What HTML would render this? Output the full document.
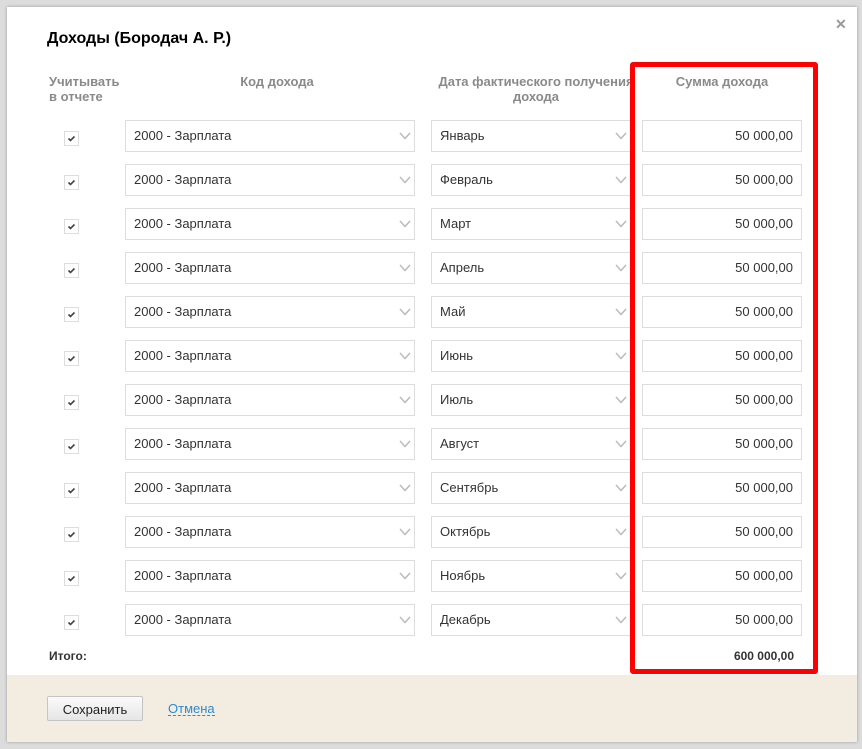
<!DOCTYPE html>
<html><head><meta charset="utf-8"><style>
body{margin:0;width:862px;height:749px;background:#dcdcdc;font-family:"Liberation Sans",Arial,sans-serif;position:relative;overflow:hidden}
.dlg{position:absolute;left:7px;top:7px;width:850px;height:735px;background:#fff;box-shadow:0 0 3px rgba(0,0,0,.3)}
.abs{position:absolute}
.title{left:40px;top:23px;font-size:16px;font-weight:bold;color:#000}
.close{left:828px;top:9px;font-size:14px;font-weight:bold;color:#999}
.h{font-size:13px;font-weight:bold;color:#8a8a8a;line-height:15px}
.box{position:absolute;border:1px solid #ddd;background:#fff;box-sizing:border-box;height:32px;font-size:13px;color:#333;line-height:30px;padding-left:8px}
.arr{position:absolute;right:3px;top:11px;width:12px;height:8px}
.cb{position:absolute;width:15px;height:15px;border:1px solid #ddd;box-sizing:border-box}
.num{text-align:right;padding-right:8px}
.red{position:absolute;left:623px;top:55px;width:188px;height:612px;border:5px solid #f00;border-radius:3px;box-sizing:border-box}
.foot{position:absolute;left:0;top:668px;width:850px;height:67px;background:#f3ece0}
.btn{position:absolute;left:40px;top:21px;width:96px;height:25px;border:1px solid #c4c4c4;border-radius:2px;background:linear-gradient(#fafafa,#e6e6e6);font-size:13px;text-align:center;line-height:25px;color:#222;box-sizing:border-box}
.link{position:absolute;left:161px;top:27px;font-size:13px;color:#2a8bd0;border-bottom:1px dashed #2a8bd0;line-height:13px}
</style></head><body>
<div class="dlg">
<div class="abs title">Доходы (Бородач А. Р.)</div>
<div class="abs close">✕</div>
<div class="abs h" style="left:42px;top:67px">Учитывать<br>в отчете</div>
<div class="abs h" style="left:170px;top:67px;width:200px;text-align:center">Код дохода</div>
<div class="abs h" style="left:424px;top:67px;width:210px;text-align:center;white-space:nowrap">Дата фактического получения<br>дохода</div>
<div class="abs h" style="left:635px;top:67px;width:160px;text-align:center">Сумма дохода</div>
<div id="rows"></div>
<div class="abs" style="left:42px;top:642px;font-size:12px;font-weight:bold;color:#333">Итого:</div>
<div class="abs" style="left:640px;top:642px;width:147px;text-align:right;font-size:12px;font-weight:bold;color:#333">600 000,00</div>
<div class="red"></div>
<div class="foot"><div class="btn">Сохранить</div><div class="link">Отмена</div></div>
</div>
<script>
var m=["Январь","Февраль","Март","Апрель","Май","Июнь","Июль","Август","Сентябрь","Октябрь","Ноябрь","Декабрь"];
var a='<svg class="arr" viewBox="0 0 12 8"><path d="M1 1 L6 6.5 L11 1" fill="none" stroke="#bbb" stroke-width="1.5"/></svg>';
var c='<svg width="13" height="13" viewBox="0 0 13 13" style="position:absolute;left:0;top:0"><path d="M3.5 6.5 L5.5 8.5 L9.5 4.5" fill="none" stroke="#444" stroke-width="1.6"/></svg>';
var h='';
for(var i=0;i<12;i++){var y=113+i*44;
h+='<div class="cb" style="left:57px;top:'+(y+11)+'px">'+c+'</div>';
h+='<div class="box" style="left:118px;top:'+y+'px;width:290px">2000 - Зарплата'+a+'</div>';
h+='<div class="box" style="left:424px;top:'+y+'px;width:200px">'+m[i]+a+'</div>';
h+='<div class="box num" style="left:635px;top:'+y+'px;width:160px">50 000,00</div>';}
document.getElementById('rows').innerHTML=h;
</script>
</body></html>
